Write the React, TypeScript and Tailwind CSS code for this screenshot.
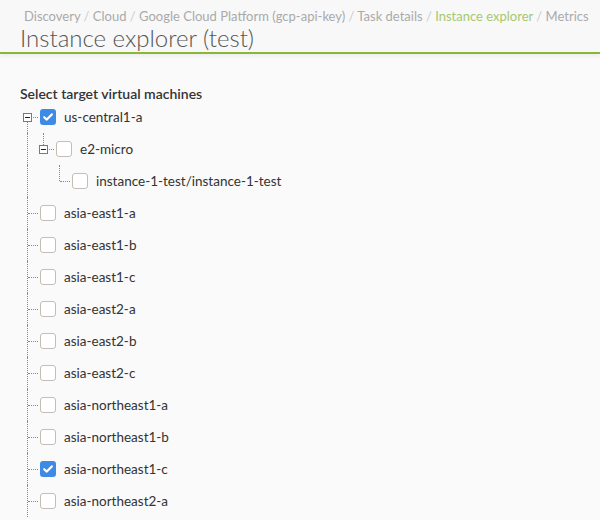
import React from "react";

type Node = {
  label: string;
  checked?: boolean;
  children?: Node[];
};

const tree: Node[] = [
  {
    label: "us-central1-a",
    checked: true,
    children: [
      {
        label: "e2-micro",
        children: [{ label: "instance-1-test/instance-1-test" }],
      },
    ],
  },
  { label: "asia-east1-a" },
  { label: "asia-east1-b" },
  { label: "asia-east1-c" },
  { label: "asia-east2-a" },
  { label: "asia-east2-b" },
  { label: "asia-east2-c" },
  { label: "asia-northeast1-a" },
  { label: "asia-northeast1-b" },
  { label: "asia-northeast1-c", checked: true },
  { label: "asia-northeast2-a" },
];

function Checkbox({ checked }: { checked?: boolean }) {
  if (checked) {
    return (
      <div className="w-4 h-4 shrink-0 rounded-[3px] bg-[#3d8be6] flex items-center justify-center">
        <svg width="12" height="12" viewBox="0 0 12 12">
          <polyline
            points="2.2,6.2 4.8,8.6 9.8,3.4"
            fill="none"
            stroke="white"
            strokeWidth="2.2"
            strokeLinecap="round"
            strokeLinejoin="round"
          />
        </svg>
      </div>
    );
  }
  return <div className="w-4 h-4 shrink-0 rounded-[3px] border border-[#c6beb6] bg-white" />;
}

type Row = {
  node: Node;
  level: number;
  guides: boolean[];
  isLast: boolean;
  isFirstRoot: boolean;
};

function flatten(nodes: Node[], level: number, guides: boolean[], out: Row[]) {
  nodes.forEach((n, i) => {
    const isLast = i === nodes.length - 1 && level > 0;
    out.push({ node: n, level, guides, isLast, isFirstRoot: level === 0 && i === 0 });
    if (n.children) flatten(n.children, level + 1, [...guides, !(i === nodes.length - 1) || level === 0], out);
  });
}

function TreeRow({ row }: { row: Row }) {
  const { node, guides, isLast, isFirstRoot } = row;
  const hasChildren = !!node.children;
  return (
    <div className="flex h-8 items-center">
      {guides.map((g, i) => (
        <div key={i} className="w-4 h-full shrink-0 flex">
          {g && <div className="w-[8px] h-full border-r border-dotted border-[#888]" />}
        </div>
      ))}
      <div className="relative w-5 h-full shrink-0">
        <div
          className={
            "absolute left-0 w-[8px] border-r border-dotted border-[#888] " +
            (isFirstRoot ? "top-1/2 bottom-0" : isLast ? "top-0 h-1/2" : "top-0 bottom-0")
          }
        />
        <div className="absolute left-[8px] w-[10px] top-1/2 border-t border-dotted border-[#888]" />
        {hasChildren && (
          <div className="absolute left-[3px] top-[12px] w-[9px] h-[9px] border border-[#7a7a7a] bg-white flex items-center justify-center">
            <div className="w-[5px] h-px bg-[#222]" />
          </div>
        )}
      </div>
      <Checkbox checked={node.checked} />
      <span className="ml-2 text-[13.5px] leading-4 text-[#333] whitespace-nowrap">{node.label}</span>
    </div>
  );
}

export default function App() {
  const rows: Row[] = [];
  flatten(tree, 0, [], rows);
  const crumbs = [
    { t: "Discovery" },
    { t: "Cloud" },
    { t: "Google Cloud Platform (gcp-api-key)" },
    { t: "Task details" },
    { t: "Instance explorer", active: true },
    { t: "Metrics" },
  ];
  return (
    <div
      className="h-[520px] w-full overflow-hidden bg-[#fafafa]"
      style={{ fontFamily: "Lato, 'Open Sans', sans-serif" }}
    >
      <div className="bg-[#f8f8f8] border-b-2 border-[#87b836] shadow-[0_2px_4px_rgba(0,0,0,0.06)]">
        <div className="pt-2 pl-[24px] text-[13px] leading-4 text-[#aaa] whitespace-nowrap">
          {crumbs.map((c, i) => (
            <React.Fragment key={i}>
              {i > 0 && <span className="text-[#ccc]"> / </span>}
              <span className={c.active ? "text-[#a6c86e]" : ""}>{c.t}</span>
            </React.Fragment>
          ))}
        </div>
        <div className="px-5 text-2xl leading-7 font-light text-[#555]">Instance explorer (test)</div>
      </div>
      <div className="px-5 pt-8">
        <div className="text-[14px] leading-4 font-semibold text-[#333]">Select target virtual machines</div>
        <div className="-mt-px">
          {rows.map((r, i) => (
            <TreeRow key={i} row={r} />
          ))}
        </div>
      </div>
    </div>
  );
}
